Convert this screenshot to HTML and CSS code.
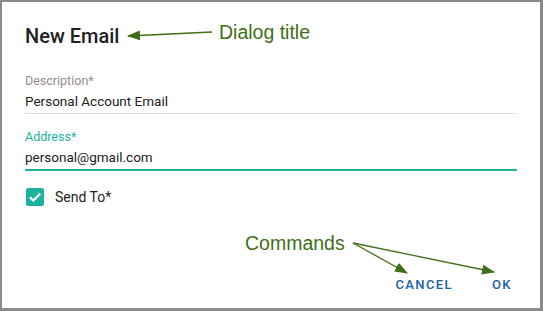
FILE: index.html
```html
<!DOCTYPE html>
<html lang="en">
<head>
    <meta charset="UTF-8">
    <title>New Email</title>
    <link rel="stylesheet" href="styles.css">
</head>
<body>
    <div class="dialog">
        <h2 class="dialog-title">New Email</h2>
        <div class="field">
            <label class="field-label">Description*</label>
            <div class="field-value">Personal Account Email</div>
        </div>
        <div class="field focused">
            <label class="field-label">Address*</label>
            <div class="field-value">personal@gmail.com</div>
        </div>
        <div class="check-row">
            <span class="checkbox">
                <svg width="18" height="18" viewBox="0 0 18 18"><path d="M4 9.2l3.3 3.3L14.2 5.6" fill="none" stroke="#fff" stroke-width="2.2"/></svg>
            </span>
            <span class="check-label">Send To*</span>
        </div>
        <div class="commands">
            <button class="cmd">CANCEL</button>
            <button class="cmd">OK</button>
        </div>

        <!-- callouts -->
        <span class="note note-title">Dialog title</span>
        <span class="note note-commands">Commands</span>
        <svg class="arrows" width="538" height="306" viewBox="0 0 538 306">
            <defs>
                <marker id="head" markerWidth="13" markerHeight="10" refX="12" refY="5" orient="auto" markerUnits="userSpaceOnUse">
                    <path d="M0 0L13 5L0 10z" fill="#3f6f17"/>
                </marker>
            </defs>
            <g stroke="#3f6f17" stroke-width="1.3" fill="none">
                <line x1="210" y1="30" x2="126" y2="34" marker-end="url(#head)"/>
                <line x1="351" y1="241" x2="405" y2="271" marker-end="url(#head)"/>
                <line x1="351" y1="241" x2="492" y2="270" marker-end="url(#head)"/>
            </g>
        </svg>
    </div>
</body>
</html>
```

FILE: styles.css
```css
:root {
    --accent: #1bb3a0;
    --text-color: #212121;
    --note-color: #3f6f17;
    --cmd-color: #1860a8;
}
body {
    margin: 0;
    background-color: #8a8a8a;
    font-family: Roboto, 'Noto Sans', sans-serif;
    color: var(--text-color);
}
.dialog {
    position: relative;
    width: 538px;
    height: 306px;
    margin: 2px 0 0 2px;
    background-color: #fff;
    box-sizing: border-box;
    padding: 0 23px 0 23px;
}
.dialog-title {
    margin: 0;
    padding-top: 22px;
    font-size: 20px;
    font-weight: 500;
    line-height: 24px;
    height: 46px;
}
.field {
    border-bottom: 1px solid #dcdcdc;
    padding-top: 3px;
    height: 44px;
    box-sizing: border-box;
    margin-bottom: 12px;
}
.field-label {
    display: block;
    font-size: 12.5px;
    line-height: 15px;
    color: #978896;
}
.field-value {
    font-size: 13.5px;
    line-height: 22px;
    margin-top: 2px;
}
.field.focused {
    border-bottom: 2px solid var(--accent);
    height: 45px;
}
.field.focused .field-label {
    color: var(--accent);
}
.check-row {
    display: flex;
    align-items: center;
    gap: 11px;
    margin-top: 17px;
    padding-left: 1px;
}
.checkbox {
    width: 18px;
    height: 18px;
    border-radius: 2px;
    background-color: var(--accent);
    display: flex;
}
.check-label {
    font-size: 14px;
}
.commands {
    position: absolute;
    right: 28px;
    bottom: 16px;
    display: flex;
    gap: 39px;
}
.cmd {
    background: none;
    border: none;
    padding: 0;
    font-family: Roboto, sans-serif;
    font-size: 13px;
    font-weight: 500;
    letter-spacing: 1.4px;
    color: var(--cmd-color);
    cursor: pointer;
}
.note {
    position: absolute;
    font-family: 'Liberation Sans', Arial, sans-serif;
    font-size: 19.5px;
    color: var(--note-color);
}
.note-title {
    left: 217px;
    top: 19px;
}
.note-commands {
    left: 243px;
    top: 230px;
}
.arrows {
    position: absolute;
    left: 0;
    top: 0;
    pointer-events: none;
}
```
